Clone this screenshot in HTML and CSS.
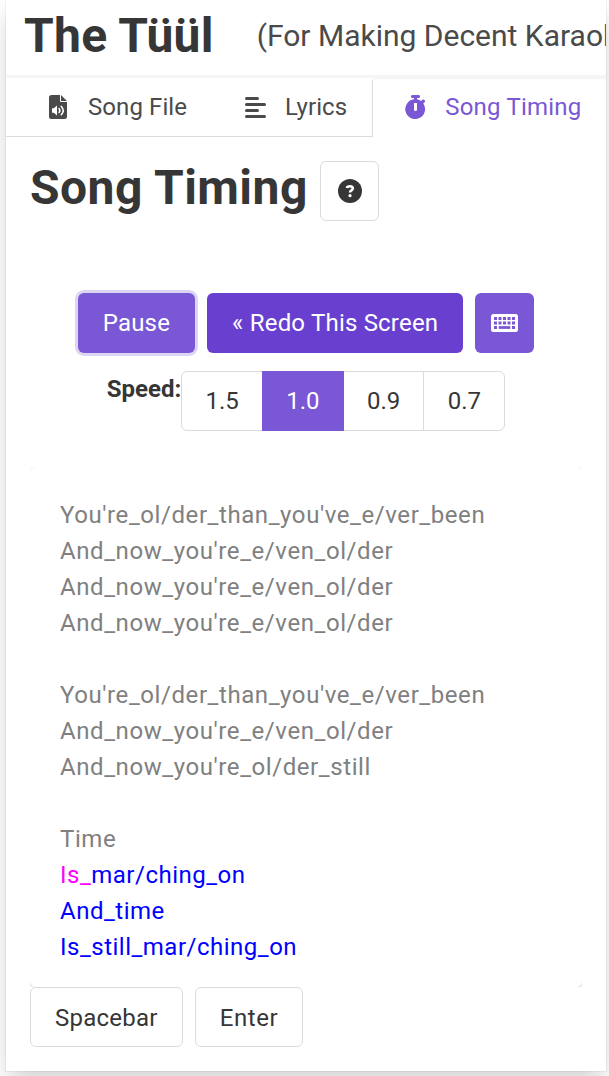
FILE: index.html
```html
<!DOCTYPE html>
<html lang="en">
<head>
<meta charset="utf-8">
<title>The Tüül</title>
<link rel="stylesheet" href="styles.css">
</head>
<body>
<main class="card">
  <header class="header">
    <h1 class="brand">The Tüül</h1>
    <p class="tagline">(For Making Decent Karaoke)</p>
  </header>
  <nav class="tabs">
    <a class="tab"><span class="icon"><svg width="18" height="24" viewBox="0 0 18 24"><path fill="currentColor" fill-rule="evenodd" d="M2.5 0H11v6q0 1 1 1h6v14.500q0 2.500-2.500 2.500H2.500q-2.500 0-2.500-2.500V2.500Q0 0 2.500 0ZM12 0l6 6h-6ZM3 13.2h1.800L8 10.500v10l-3.200-2.700H3Z"/><path d="M10 13.500q1.800 2 0 4M12.200 11.200q4 4.300 0 8.600" fill="none" stroke="#fff" stroke-width="1.5" stroke-linecap="round"/></svg></span><span>Song File</span></a>
    <a class="tab"><span class="icon"><svg width="21" height="24" viewBox="0 0 21 24"><path d="M1.500 3.500h11M1.500 9.500h18M1.500 15.500h11M1.500 21.500h18" stroke="currentColor" stroke-width="3" stroke-linecap="round"/></svg></span><span>Lyrics</span></a>
    <a class="tab tab-active"><span class="icon"><svg width="21" height="24" viewBox="0 0 21 24"><path fill="currentColor" fill-rule="evenodd" d="M7 0h7q1 0 1 1.5T14 3h-2v1.3q2.4.4 4.2 1.8l1.5-1.5q.7-.5 1.4.2l.7.7q.6.7 0 1.4l-1.5 1.6A9.900 9.900 0 1 1 9 4.3V3H7Q6 3 6 1.500T7 0Zm2 8.500v6.200q0 1.300 1.500 1.300t1.500-1.300V8.500Q12 8 11.500 8h-2Q9 8 9 8.500Z"/></svg></span><span>Song Timing</span></a>
  </nav>
  <section class="content">
    <div class="heading">
      <h2 class="title">Song Timing</h2>
      <button class="button help" aria-label="Help"><svg width="24" height="24" viewBox="0 0 24 24"><circle cx="12" cy="12" r="12" fill="currentColor"/><path d="M8.900 9Q9.200 7.300 12 7.300T14.800 9.500C14.800 11.500 12 11.200 12 13.500" fill="none" stroke="#fff" stroke-width="2.6"/><circle cx="12" cy="16.700" r="1.600" fill="#fff"/></svg></button>
    </div>
    <div class="buttons">
      <button class="button primary focused">Pause</button>
      <button class="button primary dark">« Redo This Screen</button>
      <button class="button primary keys" aria-label="Keyboard"><svg width="27" height="18" viewBox="0 0 27 18"><rect width="27" height="18" rx="2.5" fill="currentColor"/><path d="M3 4.500h21M3 9h21M3 13.500h3M21 13.500h3" stroke="#7957d5" stroke-width="2.8" stroke-dasharray="3 1.5"/><path d="M7.700 13.500h11.600" stroke="#7957d5" stroke-width="2.8"/></svg></button>
    </div>
    <div class="speed">
      <span class="label">Speed:</span>
      <div class="options">
        <button class="button">1.5</button><button class="button primary">1.0</button><button class="button">0.9</button><button class="button">0.7</button>
      </div>
    </div>
    <div class="clip"><div class="lyrics"><span class="sung">You're_ol/der_than_you've_e/ver_been
And_now_you're_e/ven_ol/der
And_now_you're_e/ven_ol/der
And_now_you're_e/ven_ol/der

You're_ol/der_than_you've_e/ver_been
And_now_you're_e/ven_ol/der
And_now_you're_ol/der_still

Time
</span><span class="current">Is_</span><span class="next">mar/ching_on
And_time
Is_still_mar/ching_on</span></div></div>
    <div class="inputs">
      <button class="button">Spacebar</button>
      <button class="button enter">Enter</button>
    </div>
  </section>
</main>
</body>
</html>
```
FILE: styles.css
```css
* { box-sizing: border-box; margin: 0; }
html { overflow: hidden; background: #fff; }
body { font: 24px/36px Roboto, sans-serif; color: #4a4a4a; height: 1076px; overflow: hidden; }
.card { width: 600px; height: 1071px; margin-left: 6px; background: #fff; box-shadow: 0 12px 24px -3px rgba(10,10,10,.2), 0 0 0 1px rgba(10,10,10,.04); }
.header { height: 78px; padding: 0 0 3px 18px; border-bottom: 3px solid #f5f5f5; display: flex; align-items: center; gap: 43px; overflow: hidden; white-space: nowrap; }
.brand, .title { font-size: 48px; line-height: 54px; font-weight: 700; color: #363636; }
.brand { letter-spacing: .25px; }
.title { letter-spacing: .46px; }
.tagline { font-size: 30px; line-height: 38px; }
.tabs { display: flex; justify-content: flex-end; height: 59px; border-bottom: 1px solid #dbdbdb; letter-spacing: .08px; }
.tab { display: flex; align-items: center; height: 59px; padding: 0 25px 2px; white-space: nowrap; }
.tab-active { color: #7957d5; background: #fff; border: 1px solid #dbdbdb; border-top-color: #f5f5f5; border-right: 0; border-bottom: 0; border-radius: 4px 4px 0 0; padding: 0 24.5px 3px 24px; letter-spacing: .22px; }
.icon { width: 36px; margin-right: 12px; display: flex; justify-content: center; }
svg { display: block; flex: none; }
.content { padding: 24px; }
.heading { display: flex; gap: 12px; height: 60px; }
.button { display: flex; align-items: center; justify-content: center; height: 60px; padding: 0 24px; border: 1px solid #dbdbdb; border-radius: 6px; background: #fff; color: #363636; font: inherit; white-space: nowrap; }
.help { width: 59px; padding: 0 0 0 1px; }
.primary { background: #7957d5; border-color: transparent; color: #fff; }
.dark { background: #683fcf; }
.focused { box-shadow: 0 0 0 3px rgba(121,87,213,.25); }
.keys { width: 59px; padding: 0; }
.buttons { display: flex; justify-content: center; gap: 12px; margin-top: 72px; }
.buttons .button { letter-spacing: .2px; }
.speed { display: flex; justify-content: center; margin-top: 18px; }
.label { font-weight: 700; color: #363636; }
.options { display: flex; }
.options .button { width: 81.75px; padding: 0; border-radius: 0; margin-right: -1px; }
.options .button:first-child { border-radius: 6px 0 0 6px; }
.options .button:last-child { border-radius: 0 6px 6px 0; margin-right: 0; }
.options .primary { border-color: #7957d5; position: relative; }
.clip { height: 520px; margin-top: 36px; overflow: hidden; }
.lyrics { height: 520px; padding: 30px; border-radius: 6px; background: #fff; white-space: pre; letter-spacing: .5px; box-shadow: 0 12px 24px -3px rgba(10,10,10,.18), 0 0 0 1px rgba(10,10,10,.04); }
.sung { color: gray; letter-spacing: .58px; }
.current { color: #f0f; }
.next { color: #00f; }
.inputs { display: flex; gap: 12px; }
.inputs .button { padding-top: 2px; letter-spacing: .25px; }
.inputs .enter { letter-spacing: .55px; }
```
